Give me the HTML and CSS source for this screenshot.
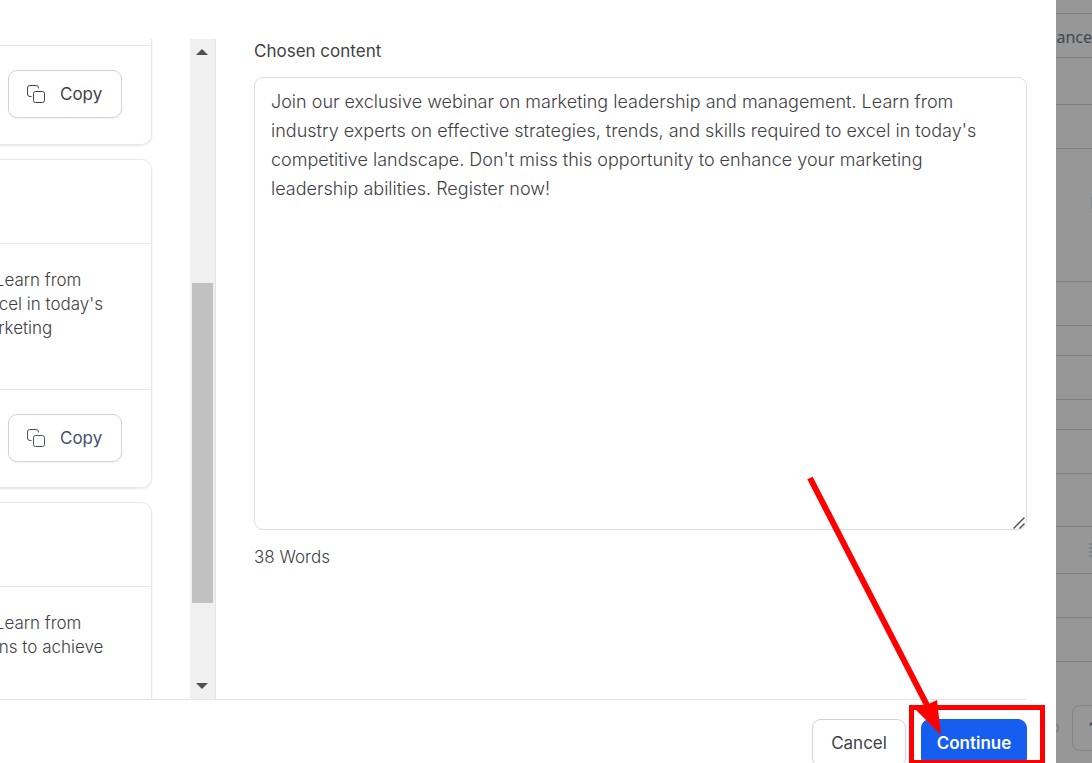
FILE: index.html
```html
<!DOCTYPE html>
<html lang="en">
<head>
    <meta charset="UTF-8">
    <meta name="viewport" content="width=device-width, initial-scale=1.0">
    <title>Choose content</title>
    <link rel="stylesheet" href="styles.css">
</head>
<body>
    <main class="dialog">
        <div class="dialog-body">
            <!-- Generated results -->
            <section class="results">
                <article class="card card-first">
                    <div class="card-footer">
                        <button type="button" class="btn copy-btn">
                            <svg class="copy-icon" viewBox="0 0 18 18"><path d="M4.500 11.500H3Q.5 11.500.5 9V3Q.5.5 3 .5H9Q11.500.5 11.500 3V3.500"/><rect x="6.500" y="6.500" width="11" height="11" rx="2"/></svg>
                            Copy
                        </button>
                    </div>
                </article>
                <article class="card">
                    <div class="card-header"></div>
                    <p class="card-text">Join our exclusive webinar on marketing leadership and management. Learn from<br>industry experts on effective strategies, trends, and skills required to excel in today's<br>competitive landscape. Don't miss this opportunity to enhance your marketing<br>leadership abilities. Register now!</p>
                    <div class="card-footer">
                        <button type="button" class="btn copy-btn copy-btn-blue">
                            <svg class="copy-icon" viewBox="0 0 18 18"><path d="M4.500 11.500H3Q.5 11.500.5 9V3Q.5.5 3 .5H9Q11.500.5 11.500 3V3.500"/><rect x="6.500" y="6.500" width="11" height="11" rx="2"/></svg>
                            Copy
                        </button>
                    </div>
                </article>
                <article class="card card-last">
                    <div class="card-header"></div>
                    <p class="card-text">Join our exclusive webinar on marketing leadership and management. Learn from<br>industry experts on effective strategies and trends, and get skill and plans to achieve</p>
                </article>
            </section>

            <div class="scrollbar">
                <span class="arrow arrow-up"></span>
                <div class="track"><div class="thumb"></div></div>
                <span class="arrow arrow-down"></span>
            </div>

            <!-- Chosen content -->
            <section class="chosen">
                <label for="content">Chosen content</label>
                <div class="textarea-wrap">
                    <textarea id="content" name="content" spellcheck="false">Join our exclusive webinar on marketing leadership and management. Learn from industry experts on effective strategies, trends, and skills required to excel in today's competitive landscape. Don't miss this opportunity to enhance your marketing leadership abilities. Register now!</textarea>
                    <svg class="grip" viewBox="0 0 12 12"><path d="M.5 11.500L11.500.5M6.500 11.500L11.500 6.500"/></svg>
                </div>
                <p class="word-count">38 Words</p>
            </section>
        </div>
        <footer class="dialog-footer">
            <button type="button" class="btn btn-cancel">Cancel</button>
            <button type="button" class="btn btn-primary">Continue</button>
        </footer>
    </main>

    <!-- Dimmed page behind the dialog -->
    <aside class="backdrop">
        <div class="row row-top blue"></div>
        <div class="row blue"><span class="tab-name">ance</span></div>
        <div class="row row-tall blue"></div>
        <div class="row blue"></div>
        <div class="row row-hero"><span class="dot"></span></div>
        <div class="row"></div>
        <div class="row row-short"></div>
        <div class="row"></div>
        <div class="row row-short"></div>
        <div class="row"></div>
        <div class="row row-head blue"></div>
        <div class="row row-tall blue"><span class="lines"></span></div>
        <div class="row"></div>
        <div class="row"></div>
        <div class="pager">
            <span class="ring"></span>
            <button type="button" class="page-btn">1</button>
        </div>
    </aside>

    <svg class="pointer" viewBox="0 0 240 290">
        <rect x="106.500" y="234.500" width="131" height="55"/>
        <path d="M5 5L124 236"/>
        <polygon points="111,237 132,227 136,262"/>
    </svg>
</body>
</html>
```
FILE: styles.css
```css
* {
    box-sizing: border-box;
}
body {
    margin: 0;
    height: 100vh;
    display: flex;
    overflow: hidden;
    position: relative;
    font-family: Inter, "Liberation Sans", sans-serif;
    font-size: 17px;
    color: #3f4045;
    background: #979797;
}
.dialog {
    flex: 1;
    min-width: 0;
    display: flex;
    flex-direction: column;
    padding-top: 39px;
    background: white;
}
.dialog-body {
    flex: 1;
    min-height: 0;
    display: grid;
    grid-template-columns: 190px 26px 1fr;
    grid-template-rows: 100%;
}
.results {
    display: flex;
    flex-direction: column;
    align-items: flex-end;
    gap: 14px;
    padding-right: 38px;
    overflow: hidden;
}
.card {
    flex: none;
    width: 748px;
    border: 1px solid #e7e8ec;
    border-radius: 10px;
    box-shadow: 0 1px 2px rgba(16,24,40,0.1);
}
.card-first {
    border-top: none;
    border-radius: 0 0 10px 10px;
    padding: 6px 0 1px;
}
.card-last {
    min-height: 240px;
}
.card-header {
    height: 83px;
}
.card-text {
    height: 146px;
    margin: 0;
    padding: 24px 32px;
    border-top: 1px solid #e7e8ec;
    font-weight: 300;
    line-height: 24px;
    white-space: nowrap;
}
.card-footer {
    display: flex;
    justify-content: flex-end;
    padding: 24px 29px 25px;
    border-top: 1px solid #e7e8ec;
}
.btn {
    height: 48px;
    padding: 0 18px;
    border: 1px solid #d0d3de;
    border-radius: 9px;
    background: white;
    color: #3f4045;
    font-family: inherit;
    font-size: 17px;
    box-shadow: 0 1px 2px rgba(16,24,40,0.05);
    cursor: pointer;
}
.copy-btn {
    display: flex;
    align-items: center;
    gap: 15px;
    width: 114px;
}
.copy-btn-blue {
    color: #44506a;
}
.copy-icon {
    width: 18px;
    height: 18px;
    flex: none;
    fill: none;
    stroke: currentColor;
}
.scrollbar {
    display: flex;
    flex-direction: column;
    align-items: center;
    padding: 10px 1px 10px 0;
    background: #f0f0f0;
    border-right: 1px solid #e4e4e4;
}
.arrow {
    border: 6px solid transparent;
}
.arrow-up {
    border-top-width: 0;
    border-bottom-color: #505050;
}
.arrow-down {
    border-bottom-width: 0;
    border-top-color: #505050;
}
.track {
    flex: 1;
    width: 21px;
    padding-top: 228px;
}
.thumb {
    height: 80%;
    background: #c1c1c1;
}
.chosen {
    display: flex;
    flex-direction: column;
    padding: 0 29px 130px 38px;
}
label {
    height: 38px;
    line-height: 25px;
}
.textarea-wrap {
    flex: 1;
    position: relative;
}
textarea {
    display: block;
    width: 100%;
    height: 100%;
    padding: 9px 16px;
    border: 1px solid #dcdde6;
    border-radius: 9px;
    resize: none;
    font-family: inherit;
    font-size: 18px;
    font-weight: 300;
    line-height: 29px;
    color: #3f4045;
    outline: none;
}
.grip {
    position: absolute;
    right: 2px;
    bottom: 1px;
    width: 12px;
    height: 12px;
    fill: none;
    stroke: #555;
    stroke-width: 1.5;
}
.word-count {
    height: 39px;
    margin: 0;
    padding-top: 15px;
    line-height: 25px;
    font-weight: 300;
}
.dialog-footer {
    display: flex;
    justify-content: flex-end;
    gap: 15px;
    height: 64px;
    margin-right: 29px;
    padding-top: 19px;
    border-top: 1px solid #e4e4e4;
}
.btn-cancel {
    width: 94px;
    padding: 0;
}
.btn-primary {
    width: 106px;
    padding: 0;
    border-color: #155eef;
    background: #155eef;
    color: white;
    font-weight: 600;
}
.backdrop {
    width: 36px;
    display: flex;
    flex-direction: column;
    overflow: hidden;
}
.row {
    flex: none;
    height: 44px;
    display: flex;
    align-items: center;
    justify-content: flex-end;
    border-bottom: 1px solid #808080;
}
.blue {
    border-color: #7b7f86;
}
.row-top {
    height: 14px;
}
.row-tall {
    height: 47px;
}
.row-short {
    height: 30px;
}
.row-head {
    height: 53px;
}
.row-hero {
    height: 133px;
    padding-bottom: 24px;
}
.tab-name {
    padding-top: 2px;
    font-family: "Noto Sans", sans-serif;
    font-size: 16px;
    color: #424850;
}
.dot {
    width: 1px;
    height: 12px;
    background: #858a91;
}
.lines {
    width: 3px;
    height: 15px;
    background: repeating-linear-gradient(#7c838c 0 2px, transparent 2px 4px);
}
.pager {
    flex: 1;
    display: flex;
    justify-content: space-between;
    padding-top: 43px;
}
.ring {
    width: 6px;
    height: 8px;
    margin: 19px 0 0 -3px;
    border: 1px solid #777;
    border-radius: 50%;
}
.page-btn {
    flex: none;
    width: 46px;
    height: 46px;
    margin-right: -26px;
    padding: 0 0 0 16px;
    border: 1px solid #858585;
    border-radius: 8px;
    background: none;
    font: 600 16px Inter, sans-serif;
    text-align: left;
    color: #303846;
}
.pointer {
    position: absolute;
    right: 47px;
    bottom: 0;
    width: 240px;
    height: 290px;
    pointer-events: none;
    fill: none;
    stroke: red;
    stroke-width: 5;
}
.pointer path {
    stroke-width: 6;
}
.pointer polygon {
    fill: red;
    stroke: none;
}
```
